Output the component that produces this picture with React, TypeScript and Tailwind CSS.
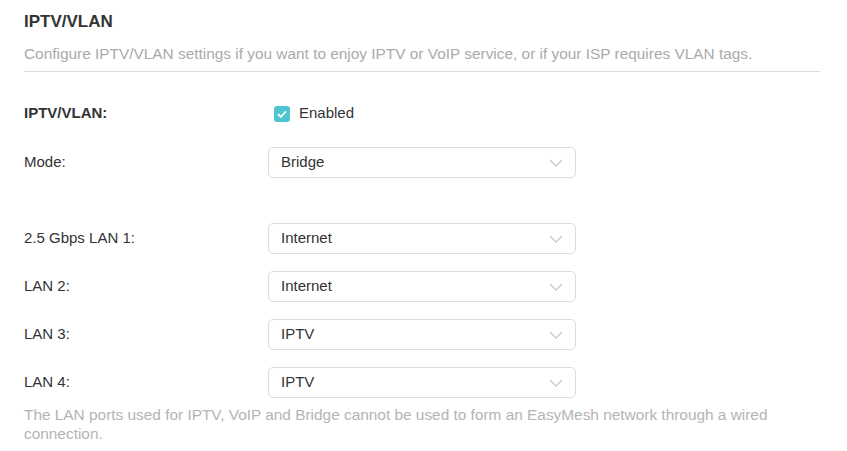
import { ReactNode } from 'react';

type Row = {
  label: string;
  value: string;
};

const lanRows: Row[] = [
  { label: '2.5 Gbps LAN 1:', value: 'Internet' },
  { label: 'LAN 2:', value: 'Internet' },
  { label: 'LAN 3:', value: 'IPTV' },
  { label: 'LAN 4:', value: 'IPTV' },
];

function Chevron() {
  return (
    <svg width="14" height="8" viewBox="0 0 14 8" fill="none">
      <path d="M1 1l6 6 6-6" stroke="#c8c8c8" strokeWidth="1.3" />
    </svg>
  );
}

function Select({ value }: { value: string }) {
  return (
    <div className="w-[308px] h-[31px] border border-[#dcdcdc] rounded-[5px] flex items-center justify-between pl-[12px] pr-[12px] text-[15px] text-[#333]">
      <span>{value}</span>
      <Chevron />
    </div>
  );
}

function FieldRow({ label, children, bold }: { label: string; children: ReactNode; bold?: boolean }) {
  return (
    <div className="flex items-center h-[31px]">
      <div className={`w-[244px] text-[15px] text-[#333] ${bold ? 'font-bold' : ''}`}>{label}</div>
      {children}
    </div>
  );
}

export default function App() {
  return (
    <div className="min-h-screen bg-white px-[24px] pt-[12px] font-['Liberation_Sans',Arial,sans-serif]">
      <div className="w-[796px]">
        <h2 className="text-[17px] font-bold text-[#333] leading-[20px]">IPTV/VLAN</h2>
        <p className="mt-[12px] text-[15.4px] text-[#aaa] leading-[20px]">
          Configure IPTV/VLAN settings if you want to enjoy IPTV or VoIP service, or if your ISP requires VLAN tags.
        </p>
        <div className="mt-[7px] border-t border-[#ddd]" />

        <div className="mt-[26px] flex flex-col">
          <FieldRow label="IPTV/VLAN:" bold>
            <label className="flex items-center gap-[9px] ml-[6px]">
              <span className="w-[16px] h-[16px] rounded-[3px] bg-[#4ec5d0] flex items-center justify-center">
                <svg width="10" height="8" viewBox="0 0 10 8" fill="none">
                  <path d="M1 4l2.8 2.8L9 1.4" stroke="white" strokeWidth="1.8" />
                </svg>
              </span>
              <span className="text-[15px] text-[#333]">Enabled</span>
            </label>
          </FieldRow>

          <div className="mt-[18px]">
            <FieldRow label="Mode:">
              <Select value="Bridge" />
            </FieldRow>
          </div>

          <div className="mt-[45px] flex flex-col gap-[17px]">
            {lanRows.map((row) => (
              <FieldRow key={row.label} label={row.label}>
                <Select value={row.value} />
              </FieldRow>
            ))}
          </div>

          <p className="mt-[7px] text-[15.4px] leading-[19px] text-[#b4b4b4] w-[770px]">
            The LAN ports used for IPTV, VoIP and Bridge cannot be used to form an EasyMesh network through a wired connection.
          </p>
        </div>
      </div>
    </div>
  );
}
